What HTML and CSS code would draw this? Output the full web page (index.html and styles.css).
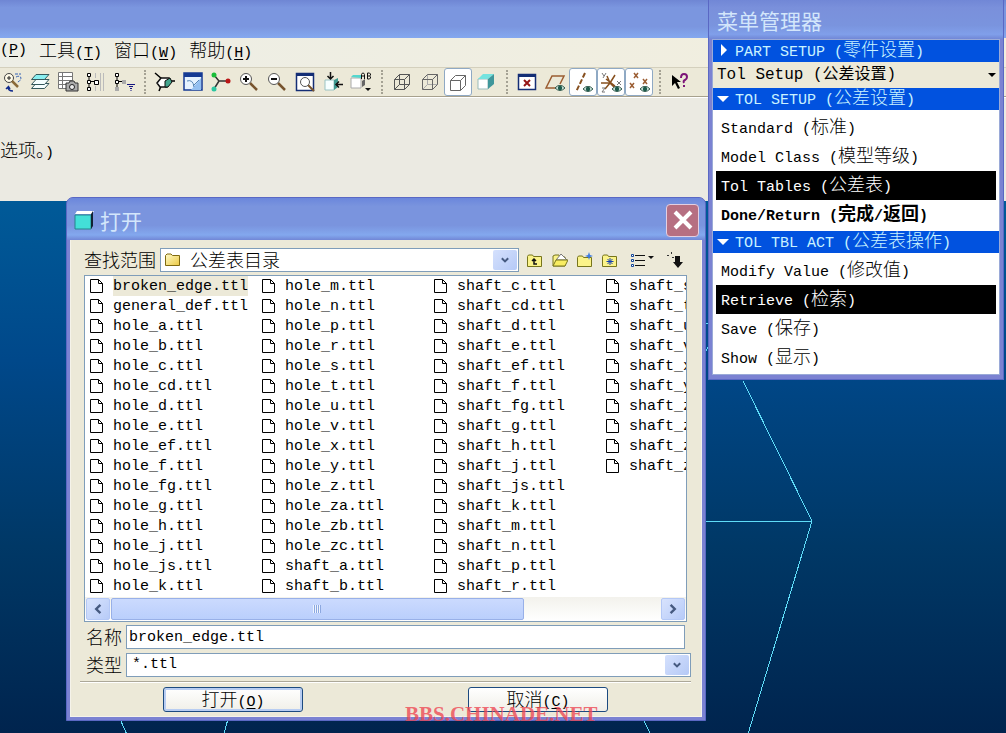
FILE: index.html
```html
<!DOCTYPE html>
<html lang="zh-CN">
<head>
<meta charset="utf-8">
<title>打开</title>
<link rel="stylesheet" href="styles.css">
</head>
<body>
<svg class="defs" aria-hidden="true">
  <defs>
    <linearGradient id="folderFill" x1="0" y1="0" x2="1" y2="1"><stop offset="0" stop-color="#fffbc8"/><stop offset="1" stop-color="#ecc944"/></linearGradient>
    <symbol id="file" viewBox="0 0 14 16"><path d="M.5 1.500h8l4 4v9h-12z" fill="#fff" stroke="#000"/><path d="M8.500 1.500v4h4" fill="none" stroke="#000"/></symbol>
    <symbol id="folder" viewBox="0 0 16 14"><path d="M.5 12.500v-10l1.500-1.500h4l1.500 1.500h7v10z" fill="url(#folderFill)" stroke="#806a10"/></symbol>
    <symbol id="chevron" viewBox="0 0 10 8"><path d="M1.500 2 5 5.500 8.500 2" fill="none" stroke="#465a80" stroke-width="2.200"/></symbol>
    <symbol id="eye" viewBox="0 0 10 6"><path d="M0 3Q5-2.500 10 3 5 8 0 3z" fill="#cfe6de" stroke="#31584c"/><circle cx="5" cy="3" r="2.200" fill="#1d5a4b"/></symbol>
  </defs>
</svg>

<main class="app">
  <div class="app-title"></div>
  <nav class="menubar">
    <button>(<u>P</u>)</button>
    <button><span class="zh">工具</span>(<u>T</u>)</button>
    <button><span class="zh">窗口</span>(<u>W</u>)</button>
    <button><span class="zh">帮助</span>(<u>H</u>)</button>
  </nav>
  <div class="toolbar">
    <button class="first" aria-label="查找"><svg viewBox="0 0 20 20"><circle cx="6" cy="6" r="4.500" fill="#fffbe8" stroke="#444"/><path d="M4 6h4M6 4v4" stroke="#222"/><path d="m9 9 6 6" stroke="#8a6a3a" stroke-width="2.500"/><path d="M12 2h6M13 5q4-2 5 1-1 4-4 4" stroke="#3563b5" fill="none" stroke-dasharray="3 1"/><path d="M10 19q-5 0-5-4l-2 2m2-3 2 3" stroke="#102a8c" stroke-width="1.500" fill="none"/></svg></button>
    <button aria-label="图层"><svg viewBox="0 0 20 20"><g stroke="#35595c" fill="#f5ffff"><path d="M1.500 16.500 6 11.500h13l-4.500 5z"/><path d="M1.500 12.500 6 7.500h13l-4.500 5z"/><path d="M1.500 7.500 6 2.500h13l-4.500 5z" fill="#89eff0"/></g></svg></button>
    <button aria-label="快照"><svg viewBox="0 0 20 20"><path d="M.5.5h14v16H.5zM.5 4.500h14M.5 8.500h14M.5 12.500h14M4.500.5v16" fill="#fff" stroke="#777"/><path d="M8 11h3l1-2h4l1 2h3v8H8z" fill="#aaa" stroke="#333"/><circle cx="14" cy="15" r="2.500" fill="#eee" stroke="#222"/></svg></button>
    <button aria-label="模型树列"><svg viewBox="0 0 20 20"><path d="M3 4v12M4 9.500h4" stroke="#000" fill="none"/><g fill="#fff" stroke="#000"><path d="M1.500 1.500h3v3h-3zM1.500 8.500h3v3h-3zM1.500 15.500h3v3h-3zM8.500 8.500h4v4h-4z"/></g><path d="M9.500 1v5M9.500 14v5M14.500 1v18M17.500 1v18" stroke="#bbb"/></svg></button>
    <button aria-label="模型树过滤"><svg viewBox="0 0 20 20"><path d="M3 4v12M4 9.500h5" stroke="#000" fill="none"/><path d="M1.500 1.500h3v3h-3zM1.500 8.500h3v3h-3z" fill="#fff" stroke="#000"/><path d="M1 15h4v4H1zM8 8h4v4H8z" fill="#aaa"/><path d="M13 12.500h8M15 14.500h4M16 16.500h2M16.500 18.500h1" stroke="#151580"/></svg></button>
    <i class="sep"></i>
    <button aria-label="旋转中心"><svg viewBox="0 0 20 20"><path d="M0 1l7 6M6 14l-2 5M15 9h5" stroke="#000" fill="none" stroke-width="1.500"/><path d="M2 11 6 6h8l2 3-4 6H5z" fill="#fff" stroke="#111" stroke-width="1.500"/><path d="M10 15V9l5-3 2 4-4 5z" fill="#44a58e" stroke="#111"/></svg></button>
    <button aria-label="重画"><svg viewBox="0 0 20 20"><path d="M1 1h18v17H1z" fill="#e5f2ff" stroke="#143a94" stroke-width="1.500"/><path d="M1 1h18v4H1z" fill="#143a94"/><path d="m18 6-10 12h10z" fill="#93bff0"/><path d="M4 9q6-2 7 6M10 14l6-6" stroke="#5585b5" fill="none"/></svg></button>
    <button aria-label="方向"><svg viewBox="0 0 20 20"><path d="M3 3l5 6-5 8M8 9h9" stroke="#333" fill="none" stroke-width="1.500"/><circle cx="3" cy="3" r="2.500" fill="#18bd39"/><circle cx="3" cy="17" r="2.500" fill="#2bc6a0"/><circle cx="17" cy="9" r="2.500" fill="#ba1616"/></svg></button>
    <button aria-label="放大"><svg viewBox="0 0 20 20"><path d="m11 11 7 7" stroke="#77542e" stroke-width="2.500"/><circle cx="7" cy="7" r="5.500" fill="#fff" stroke="#555"/><path d="M4 7h6M7 4v6" stroke="#111" stroke-width="2"/></svg></button>
    <button aria-label="缩小"><svg viewBox="0 0 20 20"><path d="m11 11 7 7" stroke="#77542e" stroke-width="2.500"/><circle cx="7" cy="7" r="5.500" fill="#fff" stroke="#555"/><path d="M4 7h6" stroke="#111" stroke-width="2"/></svg></button>
    <button aria-label="重新调整"><svg viewBox="0 0 20 20"><path d="M1.500 1.500h17v17h-17z" fill="#fff" stroke="#142e75" stroke-width="1.500"/><path d="M1 1h18v3H1z" fill="#142e75"/><path d="m13 13 6 6" stroke="#77542e" stroke-width="2"/><circle cx="10" cy="10" r="4.500" fill="#fff" stroke="#555"/></svg></button>
    <button aria-label="重定向"><svg viewBox="0 0 20 20"><path d="M2 8h9v10H2z" fill="#f6ffff" stroke="#9ac3c3"/><path d="m11 8 4-2v9l-4 3z" fill="#409a91"/><path d="M7.500 0v6m-3-2 3 3 3-3M20 12.500h-6m2-3-3 3 3 3" fill="none" stroke="#111" stroke-width="1.500"/></svg></button>
    <button aria-label="视图列表"><svg viewBox="0 0 20 20"><path d="M0 6h10v10H0z" fill="#fff" stroke="#aaa"/><path d="m0 5 2-2h8v3z" fill="#55d7ce"/><path d="m11 9 3-2v6l-3 2z" fill="#666"/><path d="M10.500 7V2.500l1-1.500h1l1 1.500V7m-3-3h3M16.500 7V1h2l1 1v1l-1 1h-2m2 0 1 1v1l-1 1h-2" fill="none" stroke="#111"/><path d="M14 16h6l-3 3z" fill="#111"/></svg></button>
    <i class="sep"></i>
    <button aria-label="线框"><svg viewBox="0 0 20 20"><path d="M2.500 7.500h10v10h-10zM7.500 2.500h10v10h-10zM2.500 7.500l5-5M12.500 7.500l5-5M2.500 17.500l5-5M12.500 17.500l5-5" fill="none" stroke="#555"/></svg></button>
    <button aria-label="隐藏线"><svg viewBox="0 0 20 20"><path d="M7.500 2.500v10h10M2.500 17.500l5-5" fill="none" stroke="#aaa"/><path d="M2.500 7.500h10v10h-10zM2.500 7.500l5-5h10v10l-5 5M12.500 7.500l5-5" fill="none" stroke="#666"/></svg></button>
    <button class="on" aria-label="无隐藏线" aria-pressed="true"><svg viewBox="0 0 20 20"><path d="M2.500 8.500h10v10h-10zM2.500 8.500l5-5h10v10l-5 5M12.500 8.500l5-5" fill="none" stroke="#666"/></svg></button>
    <button aria-label="着色"><svg viewBox="0 0 20 20"><path d="M2 7h10v10H2z" fill="#fff" stroke="#9bb"/><path d="m2 7 5-5h11l-6 5z" fill="#74e3df"/><path d="m12 7 6-5v10l-6 5z" fill="#3f979b"/></svg></button>
    <i class="sep"></i>
    <button aria-label="关闭窗口"><svg viewBox="0 0 20 20"><path d="M1.500 2.500h17v15h-17z" fill="#fff" stroke="#142e75" stroke-width="1.500"/><path d="M1 2h18v3H1z" fill="#142e75"/><path d="m7 8 6 6m0-6-6 6" stroke="#951414" stroke-width="2"/></svg></button>
    <button aria-label="基准平面"><svg viewBox="0 0 20 20"><path d="M12 16H1L7 4h12l-4 8" fill="none" stroke="#9b5d32" stroke-width="1.500"/><use href="#eye" x="10" y="13" width="10" height="6"/></svg></button>
    <button class="on" aria-label="基准轴" aria-pressed="true"><svg viewBox="0 0 20 20"><path d="M12 1 3 20" stroke="#87501f" stroke-width="2" stroke-dasharray="5 2"/><use href="#eye" x="10" y="14" width="10" height="6"/></svg></button>
    <button class="on" aria-label="坐标系" aria-pressed="true"><svg viewBox="0 0 20 20"><path d="M0 11h9l-5 6M9 11 6 4M9 11l5-8M9 11l5 5M5 7l9 7" stroke="#87501f" fill="none" stroke-width="1.500"/><path d="m1 1 2 3m2-3L2 6M16 9l4 4m0-4-4 4M1 16h3l-3 4h3" stroke="#777" fill="none"/><use href="#eye" x="11" y="14" width="10" height="6"/></svg></button>
    <button class="on" aria-label="基准点" aria-pressed="true"><svg viewBox="0 0 20 20"><path d="m5 1 4 5m0-5L5 6M14 7l4 5m0-5-4 5M1 11l4 5m0-5-4 5" stroke="#9b5d32" stroke-width="1.500"/><use href="#eye" x="11" y="14" width="10" height="6"/></svg></button>
    <i class="sep"></i>
    <button aria-label="帮助"><svg viewBox="0 0 20 20"><path d="m2 3 0 11 3-3 3 6 2-1-3-6h4z" fill="#000"/><path d="M11 6q0-4 3-4t3 3q0 2-2 3t-1 3M14 13v2" fill="none" stroke="#7c1478" stroke-width="2"/></svg></button>
  </div>
  <p class="message"><span class="zh">选项。</span>)</p>
  <div class="canvas">
    <svg width="100%" height="100%" fill="none" stroke="#5fdcf8" shape-rendering="crispEdges"><path d="M743 180 812 320 748 533M700 320.500H812M120 518l8 18M228 518l-5 18M643 518l9 18M706 122h3M706 150l3-5"/></svg>
  </div>
</main>

<section class="window dialog" role="dialog" aria-labelledby="dlg-title">
  <header class="dialog-head">
    <svg class="cube" viewBox="0 0 20 20"><path d="M1 5h16v14H1z" fill="#43dfd8" stroke="#27838b"/><path d="m1 4 2-3h17l-2 3z" fill="#fff"/><path d="m17 4 2-3v15l-2 3z" fill="#123"/></svg>
    <h2 id="dlg-title">打开</h2>
    <button class="close" aria-label="关闭"><svg viewBox="0 0 20 20"><path d="m2 2 16 16M18 2 2 18" stroke="#fff" stroke-width="4"/></svg></button>
  </header>
  <form class="dialog-body">
    <div class="lookin">
      <label class="zh" for="dir">查找范围</label>
      <span class="combo dir">
        <svg class="combo-icon" viewBox="0 0 16 14"><use href="#folder"/></svg>
        <select id="dir" class="zh"><option>公差表目录</option></select>
        <svg class="drop" viewBox="-7 -7 24 22"><use href="#chevron" width="10" height="8"/></svg>
      </span>
      <div class="tools">
        <button type="button" aria-label="上一级"><svg viewBox="0 0 16 16"><path d="M.5 14.500v-10l1-1.500h4l1 1.500h8v10z" fill="#fbf389" stroke="#77751c"/><path d="M10 12H7V7m-2 2 2-2 2 2" fill="none" stroke="#111" stroke-width="1.500"/></svg></button>
        <button type="button" aria-label="工作目录"><svg viewBox="0 0 16 16"><path d="M1 14V4l2-1h4l1 2h5v9z" fill="#fbf389" stroke="#77751c"/><path d="m4 8 5-6 6 6z" fill="#fff" stroke="#777"/><path d="M1 14 4 8h12l-3 6z" fill="#f8ed62" stroke="#77751c"/></svg></button>
        <button type="button" aria-label="新建文件夹"><svg viewBox="0 0 16 16"><path d="M.5 14.500v-9l1-1.500h4l1 1.500h8v9z" fill="#fbf389" stroke="#77751c"/><path d="m12 0 1 3 3 1-3 1-1 3-1-3-3-1 3-1z" fill="#3d7be0"/></svg></button>
        <button type="button" aria-label="收藏夹"><svg viewBox="0 0 16 16"><path d="M.5 14.500v-10l1-1.500h4l1 1.500h8v10z" fill="#fbf389" stroke="#77751c"/><path d="M8 6v7M4.500 9.500h7M5.500 7l5 5m0-5-5 5" stroke="#1740b0"/></svg></button>
      </div>
      <button class="tool-wide" type="button" aria-label="列表"><svg viewBox="0 0 24 16"><path d="M5 3.500h10M5 8.500h10M5 13.500h10" stroke="#111"/><path d="M1.500 2.500h2v2h-2zM1.500 7.500h2v2h-2zM1.500 12.500h2v2h-2z" fill="#fff" stroke="#114499"/><path d="M18 4h6l-3 3z" fill="#111"/></svg></button>
      <button class="tool-last" type="button" aria-label="过滤"><svg viewBox="0 0 16 16"><path d="M0 3.500h3M4.500 0v3M5 5.500h5" stroke="#333" stroke-dasharray="2 1"/><path d="M8 4h5v6h3l-5 6-5-6h2z" fill="#111"/></svg></button>
    </div>

    <div class="browser">
      <ul class="files" id="files"></ul>
      <div class="hscroll">
        <button type="button" aria-label="向左"><svg viewBox="0 0 10 10"><path d="M7 1.500 3.500 5 7 8.500" fill="none" stroke="#465a80" stroke-width="2"/></svg></button>
        <div class="track"><div class="thumb"><i></i></div></div>
        <button type="button" aria-label="向右"><svg viewBox="0 0 10 10"><path d="M3 1.500 6.500 5 3 8.500" fill="none" stroke="#465a80" stroke-width="2"/></svg></button>
      </div>
    </div>

    <div class="field name">
      <label class="zh" for="name">名称</label>
      <input id="name" type="text" value="broken_edge.ttl">
    </div>
    <div class="field">
      <label class="zh" for="type">类型</label>
      <span class="combo">
        <select id="type"><option>*.ttl</option></select>
        <svg class="drop" viewBox="-7 -7 24 22"><use href="#chevron" width="10" height="8"/></svg>
      </span>
    </div>
    <div class="actions">
      <button type="button" class="default"><span class="zh">打开</span>(<u>O</u>)</button>
      <button type="button"><span class="zh">取消</span>(<u>C</u>)</button>
    </div>
  </form>
</section>

<aside class="window manager">
  <h2>菜单管理器</h2>
  <div class="panel">
    <button class="group"><svg viewBox="0 0 14 14"><path d="m5 1 6 6-6 6z" fill="#fff"/></svg><span>PART SETUP (<span class="zh">零件设置</span>)</span></button>
    <div class="picker">
      <select aria-label="Tol Setup"><option>Tol Setup (公差设置)</option></select>
      <svg viewBox="0 0 8 4"><path d="M0 0h8L4 4z"/></svg>
    </div>
    <button class="group"><svg viewBox="0 0 14 14"><path d="M1 5h12L7 11z" fill="#fff"/></svg><span>TOL SETUP (<span class="zh">公差设置</span>)</span></button>
    <div class="items">
      <button>Standard (<span class="zh">标准</span>)</button>
      <button>Model Class (<span class="zh">模型等级</span>)</button>
      <button class="picked">Tol Tables (<span class="zh">公差表</span>)</button>
      <button class="strong">Done/Return (<span class="zh">完成</span>/<span class="zh">返回</span>)</button>
    </div>
    <button class="group"><svg viewBox="0 0 14 14"><path d="M1 5h12L7 11z" fill="#fff"/></svg><span>TOL TBL ACT (<span class="zh">公差表操作</span>)</span></button>
    <div class="items">
      <button>Modify Value (<span class="zh">修改值</span>)</button>
      <button class="picked">Retrieve (<span class="zh">检索</span>)</button>
      <button>Save (<span class="zh">保存</span>)</button>
      <button>Show (<span class="zh">显示</span>)</button>
    </div>
  </div>
</aside>

<div class="watermark">BBS.CHINADE.NET</div>
<script src="files.js"></script>
</body>
</html>
```

FILE: files.js
```js
const names = [
  "broken_edge", "general_def",
  ..."a b c cd d e ef f fg g h j js k m n p r s t u v x y z za zb zc".split(" ").map(n => "hole_" + n),
  ..."a b c cd d e ef f fg g h j js k m n p r s t u v x y z za zb zc".split(" ").map(n => "shaft_" + n)
];
document.getElementById("files").innerHTML = names.map((n, i) =>
  `<li><svg class="file"><use href="#file"/></svg><span${i === 0 ? ' class="current"' : ""}>${n}.ttl</span></li>`
).join("");
```

FILE: styles.css
```css
* { box-sizing: border-box; }

body {
  margin: 0;
  height: 100vh;
  overflow: hidden;
  position: relative;
  color: #000;
  font: 15px/20px "Liberation Mono", "Noto Sans CJK SC", monospace;
}

button, input, select {
  font: inherit;
  color: inherit;
  margin: 0;
  padding: 0;
  border: 0;
  border-radius: 0;
  background: none;
}

select { appearance: none; }
h2, p, ul { margin: 0; padding: 0; }
u { text-underline-offset: 2px; }
.defs { position: absolute; width: 0; height: 0; }
.zh { font-family: "Noto Sans CJK SC", sans-serif; font-size: 18px; font-weight: 300; line-height: 20px; }

/* Main window */
.app { display: flex; flex-direction: column; height: 100%; background: #ebeae2; }
.app-title { height: 38px; flex: none; background: linear-gradient(#6f86d4, #7b96df 20%, #7b96df 70%, #84a8ef); }
.menubar {
  display: flex;
  gap: 12px;
  height: 29px;
  flex: none;
  align-items: center;
  padding-bottom: 3px;
  background: linear-gradient(90deg, #edeee6, #f2eedd);
}
.menubar button { white-space: nowrap; }
.toolbar {
  display: flex;
  flex: none;
  height: 30px;
  align-items: center;
  border-top: 1px solid #d4d0bd;
  border-bottom: 1px solid #a7a18d;
  background: #ece9d8;
}
.toolbar button {
  display: flex;
  align-items: center;
  justify-content: center;
  width: 28px;
  height: 28px;
  border: 1px solid transparent;
  border-radius: 3px;
}
.toolbar .first { width: 26px; }
.toolbar .on { background: #fff; border-color: #8fa9c4; }
.toolbar svg { width: 20px; height: 20px; flex: none; overflow: visible; }
.sep { width: 13px; height: 24px; padding-left: 6px; }
.sep::before { content: ""; display: block; height: 100%; border-left: 2px dotted #a5a294; }
.message { height: 104px; flex: none; padding-top: 41px; border-top: 1px solid #fff; }
.canvas { flex: 1; min-height: 0; background: linear-gradient(#005a98, #00488a 30%, #003866 65%, #00244e); }
.canvas svg { display: block; }

/* Floating windows */
.window { position: absolute; background: #7b82d2; border: 1px solid #5a68c4; }
.window h2 { font: 21px/24px "Noto Sans CJK SC", sans-serif; color: #d3e6fb; }

.dialog { left: 66px; top: 197px; width: 640px; padding: 0 3px 3px; border-radius: 7px 7px 0 0; }
.dialog-head {
  display: flex;
  align-items: center;
  gap: 6px;
  height: 42px;
  margin: 0 -3px;
  padding: 2px 6px 0 7px;
  border-radius: 6px 6px 0 0;
  background: linear-gradient(#6b87dc, #7a94de 20%, #7a94de 65%, #83a8ee 88%, #7187d6);
}
.cube { width: 20px; height: 20px; }
.close {
  display: flex;
  align-items: center;
  justify-content: center;
  width: 33px;
  height: 33px;
  margin-left: auto;
  border: 1px solid #e3cfe2;
  border-radius: 4px;
  background: #b66f82;
}
.close svg { width: 20px; height: 20px; }

.dialog-body { padding: 8px 10px 4px 14px; background: #ece9d8; border: 1px solid #f5f3ea; border-top: 0; }
.lookin { display: flex; align-items: center; height: 24px; padding-right: 8px; }
.lookin label { width: 76px; padding-bottom: 2px; white-space: nowrap; }
.combo { position: relative; display: block; flex: 1; height: 24px; background: #fff; border: 1px solid #7f9db9; }
.combo select { display: block; width: 100%; height: 22px; padding-left: 5px; line-height: 22px; }
.combo.dir select { padding-left: 29px; line-height: 20px; padding-bottom: 2px; }
.combo-icon { position: absolute; left: 4px; top: 4px; width: 16px; height: 14px; }
.drop {
  position: absolute;
  right: 1px;
  top: 1px;
  width: 24px;
  height: 20px;
  border-radius: 2px;
  background: linear-gradient(135deg, #d5e1fd, #b5c9f6);
  pointer-events: none;
}
.lookin svg { flex: none; }
.tools { display: flex; gap: 9px; padding-left: 8px; }
.tools button, .tool-last { width: 16px; height: 16px; }
.tools svg, .tool-last svg { display: block; width: 16px; height: 16px; }
.tool-wide { width: 24px; height: 16px; margin-left: 12px; }
.tool-wide svg { display: block; width: 24px; height: 16px; }
.tool-last { margin-left: 13px; }

.browser { margin: 3px 4px 3px 0; background: #fff; border: 1px solid #7f9db9; }
.lookin, .browser { margin-left: -1px; }
.files {
  display: grid;
  grid-template-rows: repeat(16, 20px);
  grid-auto-flow: column;
  grid-auto-columns: 172px;
  height: 321px;
  overflow: hidden;
  list-style: none;
}
.files li { display: flex; align-items: center; gap: 9px; padding-left: 5px; white-space: nowrap; }
.files span { height: 20px; line-height: 22px; }
.file { width: 14px; height: 16px; flex: none; }
.current { background: #ece9d8; }
.hscroll { display: flex; height: 24px; padding: 1px; background: linear-gradient(#f3f2ec, #fff); }
.hscroll button {
  display: flex;
  align-items: center;
  justify-content: center;
  width: 24px;
  border-radius: 2px;
  border: 1px solid #b4c8f6;
  background: linear-gradient(135deg, #d8e3fd, #b7cbf8);
}
.hscroll svg { width: 12px; height: 12px; }
.track { flex: 1; padding-left: 1px; }
.thumb {
  display: flex;
  align-items: center;
  justify-content: center;
  width: 75%;
  height: 22px;
  border: 1px solid #98b0e8;
  border-radius: 2px;
  background: linear-gradient(#cbdafe, #bacffc);
}
.thumb i { width: 8px; height: 8px; background: repeating-linear-gradient(90deg, #eef4fe 0 1px, #8ca8e0 1px 2px); }

.field { display: flex; align-items: center; margin-bottom: 4px; }
.field.name { padding-right: 6px; }
.field label { width: 41px; padding: 0 0 3px 1px; }
.field input { flex: 1; min-width: 0; height: 24px; padding: 1px 2px 0; background: #fff; border: 1px solid #7f9db9; }
.actions {
  display: flex;
  justify-content: space-between;
  margin-left: -5px;
  padding: 5px 83px 0;
  border-top: 1px solid #aca899;
  box-shadow: inset 0 1px #fff;
}
.actions button {
  width: 140px;
  height: 25px;
  border: 1px solid #1c4a80;
  border-radius: 3px;
  background: linear-gradient(#fff, #f0efe8);
}
.actions .default { box-shadow: inset 0 0 0 2px #b8cdf2; }

.manager { left: 708px; top: 0; width: 296px; padding: 0 3px 4px; border-top: 0; }
.manager h2 {
  height: 39px;
  margin: 0 -3px;
  padding: 8px 8px 0;
  background: linear-gradient(#7187d6, #7a90db 20%, #7a94de 65%, #809fea 88%, #7187d6);
}
.panel { border: 1px solid #9aaad8; background: #fff; }
.group, .items button { display: block; width: 100%; text-align: left; white-space: nowrap; }
.group { display: flex; align-items: center; height: 22px; padding: 0 0 2px 3px; color: #c9f2ff; background: #0152df; }
.group svg { width: 14px; height: 14px; margin-right: 5px; }
.picker { position: relative; height: 26px; background: #ece9d8; }
.picker select { display: block; width: 100%; height: 26px; padding-left: 4px; font-size: 16px; }
.picker svg { position: absolute; right: 3px; top: 11px; width: 8px; height: 4px; }
.items { padding: 3px 3px 2px; }
.items button { height: 29px; padding-left: 5px; }
.items .picked { color: #fff; background: #000; }
.items .strong, .strong .zh { font-weight: 700; }

.watermark {
  position: absolute;
  left: 405px;
  top: 703px;
  font: bold 21px/22px "Liberation Serif", serif;
  color: rgba(238, 72, 84, .8);
  white-space: nowrap;
  pointer-events: none;
}
```
